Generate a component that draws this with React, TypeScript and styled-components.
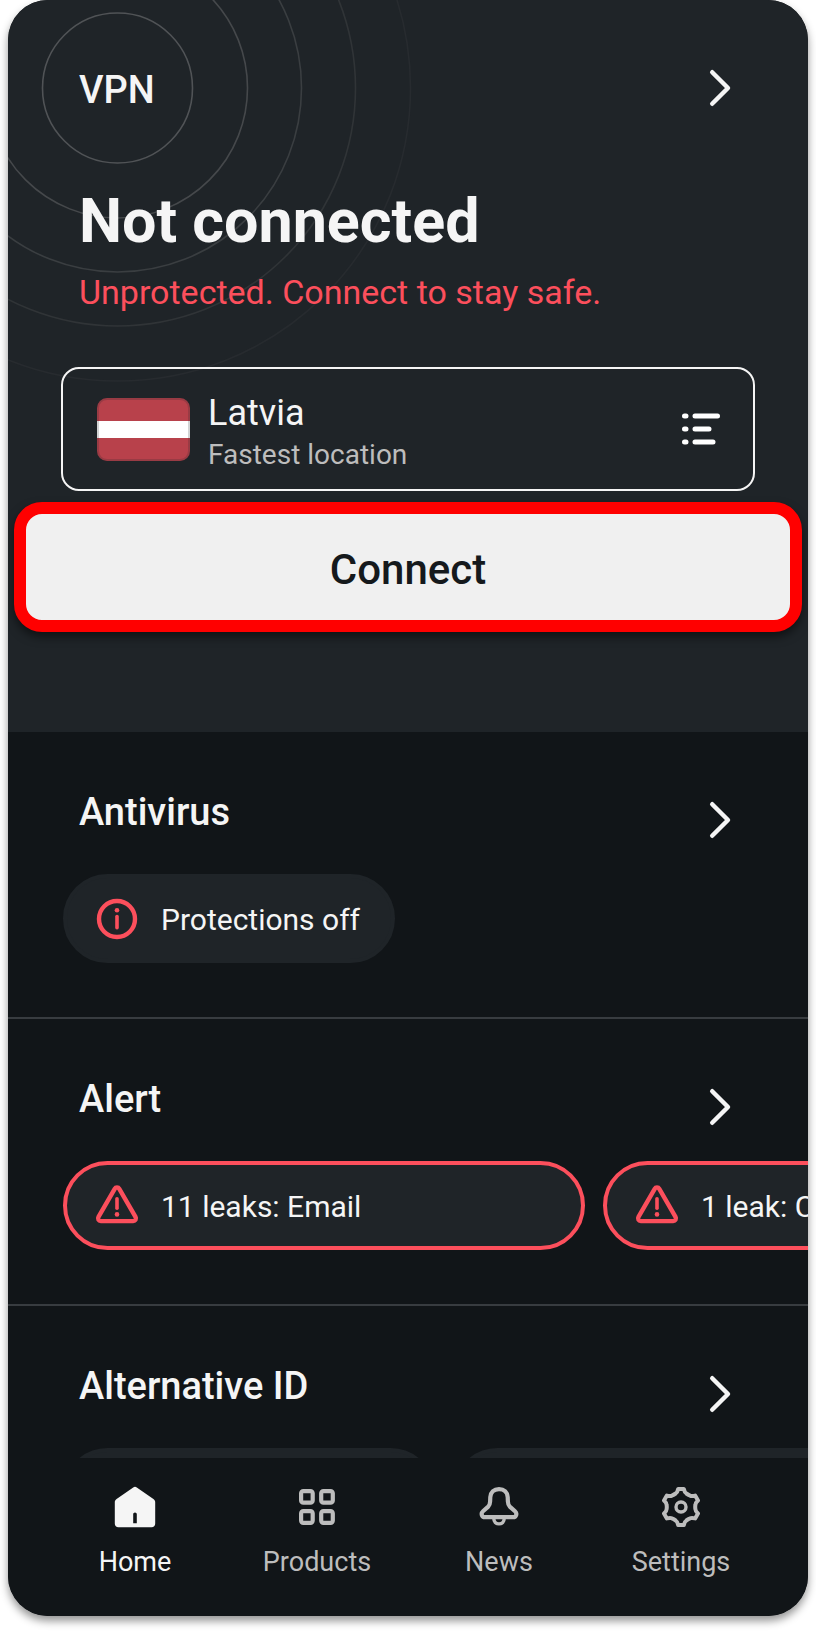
import React from "react";
import styled, { createGlobalStyle } from "styled-components";

const color = {
  hero: "#1f2428",
  base: "#111518",
  chip: "#1f2428",
  line: "#383c40",
  text: "#f5f5f5",
  muted: "#bdbdbd",
  danger: "#fc4f5c",
  highlight: "#ff0000",
};

const GlobalStyle = createGlobalStyle`
  * { box-sizing: border-box; }
  body {
    margin: 0;
    background: #ffffff;
    font-family: Roboto, "Liberation Sans", sans-serif;
    color: ${color.text};
  }
  h1, h2, p { margin: 0; }
  button { font: inherit; color: inherit; cursor: pointer; }
  svg { display: block; flex: none; overflow: visible; }
`;

const Page = styled.div`
  padding: 0 8px 16px;
`;

const Phone = styled.div`
  display: flex;
  flex-direction: column;
  overflow: hidden;
  border-radius: 40px;
  background: ${color.base};
`;

const Shadow = styled.div`
  border-radius: 40px;
  box-shadow: 0 5px 9px rgba(0, 0, 0, 0.42);
`;

const Hero = styled.section`
  position: relative;
  padding: 58px 0 100px;
  background: ${color.hero};
`;

const Rings = styled.svg`
  position: absolute;
  top: 0;
  left: 0;
`;

const HeroBody = styled.div`
  position: relative;
  display: flex;
  flex-direction: column;
`;

const SectionHeader = styled.header<{ $tall?: boolean }>`
  display: flex;
  justify-content: space-between;
  align-items: ${(p) => (p.$tall ? "flex-end" : "flex-start")};
  padding: 0 78px 0 71px;
`;

const Title = styled.h2<{ $tall?: boolean }>`
  font-size: 38px;
  line-height: ${(p) => (p.$tall ? "56px" : "44px")};
  font-weight: 500;
`;

const OpenButton = styled.button`
  display: flex;
  align-items: center;
  height: 60px;
  padding: 0;
  border: 0;
  background: none;
`;

const Status = styled.div`
  padding: 67px 71px 55px;
`;

const Headline = styled.h1`
  font-size: 61px;
  line-height: 72px;
  font-weight: 700;
`;

const Warning = styled.p`
  margin-top: 15px;
  font-size: 34px;
  line-height: 40px;
  color: ${color.danger};
`;

const LocationButton = styled.button`
  display: flex;
  align-items: center;
  height: 124px;
  margin: 0 53px;
  padding: 0 33px 0 34px;
  border: 2px solid ${color.text};
  border-radius: 18px;
  background: none;
  text-align: left;
`;

const LocationText = styled.span`
  display: flex;
  flex: 1;
  flex-direction: column;
  padding: 8px 0 0 18px;
`;

const Country = styled.span`
  font-size: 36px;
  line-height: 44px;
`;

const Hint = styled.span`
  font-size: 28px;
  line-height: 40px;
  color: ${color.muted};
`;

const ConnectButton = styled.button`
  height: 130px;
  margin: 11px 6px 0;
  padding: 6px 0 0;
  border: 12px solid ${color.highlight};
  border-radius: 28px;
  background: #f0f0f0;
  box-shadow: 0 5px 10px rgba(0, 0, 0, 0.5);
  color: #15191c;
  font-size: 42px;
  line-height: 48px;
  font-weight: 500;
`;

const Section = styled.section`
  padding-top: 58px;

  & + & {
    border-top: 2px solid ${color.line};
  }
`;

const ChipRow = styled.div<{ $peek?: boolean }>`
  display: flex;
  gap: 18px;
  height: ${(p) => (p.$peek ? "10px" : "143px")};
  margin-top: 24px;
  padding-left: 55px;
  overflow: hidden;
`;

const Chip = styled.button<{ $outlined?: boolean; $size?: "wide" | "medium" }>`
  display: flex;
  flex: none;
  align-items: center;
  gap: 24px;
  height: 89px;
  min-width: ${(p) => (p.$size === "wide" ? "522px" : p.$size === "medium" ? "372px" : "0")};
  padding: 0 31px 0 30px;
  border: 4px solid ${(p) => (p.$outlined ? color.danger : color.chip)};
  border-radius: 45px;
  background: ${color.chip};
  font-size: 30px;
  line-height: 36px;
  white-space: nowrap;
`;

const ChipLabel = styled.span`
  padding-top: 2px;
`;

const NavBar = styled.nav`
  display: grid;
  grid-template-columns: repeat(4, 1fr);
  padding: 29px 36px 36px;
  background: ${color.base};
`;

const NavItem = styled.a<{ $active?: boolean }>`
  display: flex;
  flex-direction: column;
  align-items: center;
  gap: 17px;
  color: ${(p) => (p.$active ? color.text : color.muted)};
  font-size: 27px;
  line-height: 36px;
  text-decoration: none;
`;

const rings = [
  { r: 75, stroke: "#505356" },
  { r: 130, stroke: "#45484b" },
  { r: 184, stroke: "#3a3e41" },
  { r: 238, stroke: "#303437" },
  { r: 293, stroke: "#272b2f" },
];

function RingPattern() {
  return (
    <Rings width="404" height="384" viewBox="0 0 404 384" fill="none" strokeWidth="1.6" aria-hidden="true">
      {rings.map((ring) => (
        <circle key={ring.r} cx="109.5" cy="88" r={ring.r} stroke={ring.stroke} />
      ))}
    </Rings>
  );
}

function Chevron() {
  return (
    <svg width="20" height="36" viewBox="0 0 20 36" fill="none" stroke="currentColor" strokeWidth="4.4" strokeLinecap="round" strokeLinejoin="round" aria-hidden="true">
      <path d="M2.2 2.2 18 18 2.2 33.8" />
    </svg>
  );
}

function Flag() {
  return (
    <svg width="93" height="63" viewBox="0 0 93 63" role="img" aria-label="Flag of Latvia">
      <rect width="93" height="63" rx="10" fill="#b8414b" />
      <rect y="23" width="93" height="17" fill="#ffffff" />
      <rect x="1" y="1" width="91" height="61" rx="9" fill="none" stroke="#1f2428" strokeOpacity="0.2" strokeWidth="2" />
    </svg>
  );
}

function ListIcon() {
  return (
    <svg width="39" height="32" viewBox="0 0 39 32" fill="none" stroke="#ffffff" strokeWidth="5" strokeLinecap="round" aria-hidden="true">
      <path d="M3.5 3h1.5M3.5 16h1.5M3.5 29h1.5M14 3h22.5M14 16h14M14 29h18" />
    </svg>
  );
}

function InfoIcon() {
  return (
    <svg width="40" height="40" viewBox="0 0 40 40" fill="none" stroke={color.danger} aria-hidden="true">
      <circle cx="20" cy="20" r="18" strokeWidth="4.4" />
      <path d="M20 17.6v11.2" strokeWidth="3.6" strokeLinecap="round" />
      <circle cx="20" cy="11.3" r="2.3" fill={color.danger} stroke="none" />
    </svg>
  );
}

function WarningIcon() {
  return (
    <svg width="40" height="40" viewBox="0 0 40 40" fill="none" stroke={color.danger} aria-hidden="true">
      <path
        d="M17.7 2.8 1.5 30.9C.4 32.9 1.6 35.1 3.8 35.1H36.2C38.4 35.1 39.6 32.9 38.5 30.9L22.3 2.8C21.3 1 18.7 1 17.7 2.8Z"
        strokeWidth="4.4"
        strokeLinejoin="round"
      />
      <path d="M20 12.7v9.6" strokeWidth="3.6" strokeLinecap="round" />
      <circle cx="20" cy="28.4" r="2.3" fill={color.danger} stroke="none" />
    </svg>
  );
}

function HomeIcon() {
  return (
    <svg width="40" height="40" viewBox="0 0 40 40" fill="currentColor" aria-hidden="true">
      <path
        fillRule="evenodd"
        d="M18.2.4C19.3-.4 20.7-.4 21.8.4L38.4 11.9C39.6 12.7 40.2 13.8 40.2 15.2V36.6C40.2 38.9 38.9 40.2 36.6 40.2H3.4C1.1 40.2-.2 38.9-.2 36.6V15.2C-.2 13.8.4 12.7 1.6 11.9ZM18.2 27.2V36.2H21.8V27.2C21.8 26.2 21 25.4 20 25.4S18.2 26.2 18.2 27.2Z"
      />
    </svg>
  );
}

function ProductsIcon() {
  return (
    <svg width="40" height="40" viewBox="0 0 40 40" fill="none" stroke="currentColor" strokeWidth="4.2" aria-hidden="true">
      {[4.1, 24.2].map((x) =>
        [4.1, 24.2].map((y) => <rect key={`${x}-${y}`} x={x} y={y} width="11.6" height="11.6" rx="2.2" />)
      )}
    </svg>
  );
}

function BellIcon() {
  return (
    <svg width="40" height="40" viewBox="0 0 40 40" fill="none" stroke="currentColor" strokeWidth="4.2" strokeLinejoin="round" aria-hidden="true">
      <path d="M6 30.2H34C37.4 30.2 38.4 26.4 36 24.2L30.8 19.6C29.4 18.3 29 16.8 28.9 14.6L28.7 10.2C28.4 5.4 25.2 2.2 20 2.2S11.6 5.4 11.3 10.2L11.1 14.6C11 16.8 10.6 18.3 9.2 19.6L4 24.2C1.6 26.4 2.6 30.2 6 30.2Z" />
      <path d="M14.8 31.5C14.8 34.8 17 36.9 20 36.9S25.2 34.8 25.2 31.5" strokeWidth="3.4" />
    </svg>
  );
}

function point(radius: number, degrees: number) {
  const a = (degrees * Math.PI) / 180;
  return `${(20 + radius * Math.sin(a)).toFixed(2)} ${(20 - radius * Math.cos(a)).toFixed(2)}`;
}

// Six-toothed gear: a flat tip every 60 degrees, with a short flank down to the body on each side.
const gearPath =
  [0, 60, 120, 180, 240, 300]
    .map(
      (a, i) =>
        `${i === 0 ? "M" : "L"}${point(18.2, a - 9)} L${point(18.2, a + 9)} Q${point(15, a + 14)} ${point(14.6, a + 21)} Q${point(14, a + 30)} ${point(14.6, a + 39)} Q${point(15, a + 46)} ${point(18.2, a + 51)}`
    )
    .join(" ") + "Z";

function GearIcon() {
  return (
    <svg width="40" height="40" viewBox="0 0 40 40" fill="none" stroke="currentColor" strokeWidth="4" strokeLinejoin="round" aria-hidden="true">
      <path d={gearPath} />
      <circle cx="20" cy="20" r="5" strokeWidth="3.4" />
    </svg>
  );
}

function SectionHead({ title, tall }: { title: string; tall?: boolean }) {
  return (
    <SectionHeader $tall={tall}>
      <Title $tall={tall}>{title}</Title>
      <OpenButton type="button" aria-label={`Open ${title}`}>
        <Chevron />
      </OpenButton>
    </SectionHeader>
  );
}

const navItems = [
  { label: "Home", Icon: HomeIcon, active: true },
  { label: "Products", Icon: ProductsIcon, active: false },
  { label: "News", Icon: BellIcon, active: false },
  { label: "Settings", Icon: GearIcon, active: false },
];

export default function App() {
  return (
    <>
      <GlobalStyle />
      <Page>
        <Shadow>
          <Phone>
            <main>
              <Hero>
                <RingPattern />
                <HeroBody>
                  <SectionHead title="VPN" tall />
                  <Status>
                    <Headline>Not connected</Headline>
                    <Warning>Unprotected. Connect to stay safe.</Warning>
                  </Status>
                  <LocationButton type="button">
                    <Flag />
                    <LocationText>
                      <Country>Latvia</Country>
                      <Hint>Fastest location</Hint>
                    </LocationText>
                    <ListIcon />
                  </LocationButton>
                  <ConnectButton type="button">Connect</ConnectButton>
                </HeroBody>
              </Hero>

              <Section>
                <SectionHead title="Antivirus" />
                <ChipRow>
                  <Chip type="button">
                    <InfoIcon />
                    <ChipLabel>Protections off</ChipLabel>
                  </Chip>
                </ChipRow>
              </Section>

              <Section>
                <SectionHead title="Alert" />
                <ChipRow>
                  <Chip type="button" $outlined $size="wide">
                    <WarningIcon />
                    <ChipLabel>11 leaks: Email</ChipLabel>
                  </Chip>
                  <Chip type="button" $outlined $size="wide">
                    <WarningIcon />
                    <ChipLabel>1 leak: Credit card</ChipLabel>
                  </Chip>
                </ChipRow>
              </Section>

              <Section>
                <SectionHead title="Alternative ID" />
                <ChipRow $peek>
                  <Chip as="div" $size="medium" />
                  <Chip as="div" $size="wide" />
                </ChipRow>
              </Section>
            </main>

            <NavBar aria-label="Main">
              {navItems.map(({ label, Icon, active }) => (
                <NavItem key={label} href={`#${label.toLowerCase()}`} $active={active} aria-current={active ? "page" : undefined}>
                  <Icon />
                  {label}
                </NavItem>
              ))}
            </NavBar>
          </Phone>
        </Shadow>
      </Page>
    </>
  );
}
